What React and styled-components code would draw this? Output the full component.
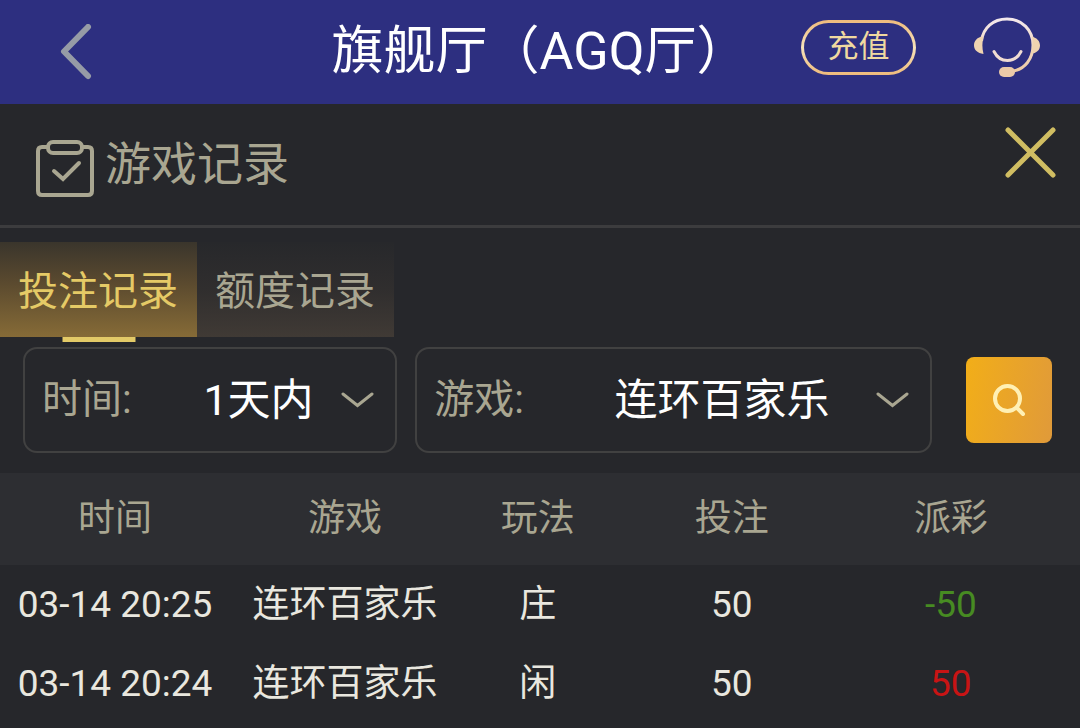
import React, { useState } from "react";
import styled, { createGlobalStyle } from "styled-components";

const games = ["连环百家乐", "经典百家乐", "龙虎"];
const ranges = ["1天内", "3天内", "7天内"];

const records = [
  { time: "03-14 20:25", game: "连环百家乐", play: "庄", bet: 50, payout: -50 },
  { time: "03-14 20:24", game: "连环百家乐", play: "闲", bet: 50, payout: 50 },
];

const BackIcon = () => (
  <svg width="32" height="56" viewBox="0 0 32 56" fill="none" aria-hidden="true">
    <path
      d="M28 3L4 27.500L28 52"
      stroke="#969ba6"
      strokeWidth="6"
      strokeLinecap="round"
      strokeLinejoin="round"
    />
  </svg>
);

const ServiceIcon = () => (
  <svg width="66" height="60" viewBox="0 0 66 60" fill="none" aria-hidden="true">
    <defs>
      <linearGradient id="service" x1="0" y1="0" x2="0" y2="60" gradientUnits="userSpaceOnUse">
        <stop stopColor="#f3e9ee" />
        <stop offset="1" stopColor="#ecc79c" />
      </linearGradient>
    </defs>
    <path
      d="M7.500 24C9 11 19 2 33 2C48 2 59 13 59 28C59 42 51 52 39 54"
      stroke="url(#service)"
      strokeWidth="3"
    />
    <path d="M8 19.500C3 20.500 0 24 0 28.500C0 33 3.500 36 9.500 37C8 31 8 25 9.500 20Z" fill="#efd3b0" />
    <path d="M58 19.500C63 21 66 24 66 28.500C66 33 63 36 56.500 37C59 31 59 25 58 19.500Z" fill="#efd3b0" />
    <path d="M20 34.500C23 40.500 27.500 43.500 33.500 43.500C39.500 43.500 44 40.500 47 34.500" stroke="#f0dcd2" strokeWidth="3" strokeLinecap="round" />
    <rect x="25" y="50" width="16" height="10" rx="5" fill="#ebcaa8" />
  </svg>
);

const RecordIcon = () => (
  <svg width="58" height="58" viewBox="0 0 58 58" fill="none" stroke="#a9a691" strokeWidth="4" aria-hidden="true">
    <path d="M11 7H6C3.500 7 2 8.500 2 11V51C2 53.500 3.500 55 6 55H52C54.500 55 56 53.500 56 51V11C56 8.500 54.500 7 52 7H47" />
    <rect x="12" y="2" width="34" height="11" rx="5" strokeWidth="4" />
    <path d="M18 31L27 39L43 23" strokeLinecap="round" />
  </svg>
);

const CloseIcon = () => (
  <svg width="51" height="51" viewBox="0 0 51 51" stroke="#d0bd62" strokeWidth="5" strokeLinecap="round" aria-hidden="true">
    <path d="M3 3L48 48M48 3L3 48" />
  </svg>
);

const ChevronIcon = () => (
  <svg width="33" height="17" viewBox="0 0 33 17" fill="none" stroke="#a9a691" strokeWidth="3" aria-hidden="true">
    <path d="M2 2L16.500 13.500L31 2" strokeLinecap="round" />
  </svg>
);

const SearchIcon = () => (
  <svg width="34" height="34" viewBox="0 0 34 34" fill="none" stroke="#fff0b4" strokeWidth="4" aria-hidden="true">
    <circle cx="15.500" cy="15.500" r="12.500" />
    <path d="M25 25L31 31" strokeLinecap="round" />
  </svg>
);

const SelectField = ({ id, label, options, grow }) => (
  <Field $grow={grow}>
    <FieldLabel htmlFor={id}>{label}:</FieldLabel>
    <Select id={id}>
      {options.map((option) => (
        <option key={option}>{option}</option>
      ))}
    </Select>
    <ChevronIcon />
  </Field>
);

const App = () => {
  const [tab, setTab] = useState("投注记录");

  return (
    <>
      <GlobalStyle />
      <Header>
        <BackButton aria-label="返回">
          <BackIcon />
        </BackButton>
        <PageTitle>旗舰厅（AGQ厅）</PageTitle>
        <Actions>
          <RechargeButton>充值</RechargeButton>
          <IconButton aria-label="客服">
            <ServiceIcon />
          </IconButton>
        </Actions>
      </Header>
      <main>
        <PanelHead>
          <PanelTitle>
            <RecordIcon />
            游戏记录
          </PanelTitle>
          <CloseButton aria-label="关闭">
            <CloseIcon />
          </CloseButton>
        </PanelHead>
        <Tabs role="tablist">
          {["投注记录", "额度记录"].map((name) => (
            <Tab
              key={name}
              role="tab"
              aria-selected={tab === name}
              $active={tab === name}
              onClick={() => setTab(name)}
            >
              {name}
            </Tab>
          ))}
        </Tabs>
        <Filters>
          <SelectField id="range" label="时间" options={ranges} grow={7} />
          <SelectField id="game" label="游戏" options={games} grow={10} />
          <SearchButton aria-label="搜索">
            <SearchIcon />
          </SearchButton>
        </Filters>
        <Table>
          <thead>
            <tr>
              <HeadCell $width="21.3%">时间</HeadCell>
              <HeadCell $width="21.3%">游戏</HeadCell>
              <HeadCell $width="14.4%">玩法</HeadCell>
              <HeadCell $width="21.5%">投注</HeadCell>
              <HeadCell>派彩</HeadCell>
            </tr>
          </thead>
          <tbody>
            {records.map((record) => (
              <tr key={record.time}>
                <Cell>{record.time}</Cell>
                <Cell>{record.game}</Cell>
                <Cell>{record.play}</Cell>
                <Cell>{record.bet}</Cell>
                <Cell $color={record.payout < 0 ? "#478b22" : "#c81414"}>{record.payout}</Cell>
              </tr>
            ))}
          </tbody>
        </Table>
      </main>
    </>
  );
};

export default App;

const GlobalStyle = createGlobalStyle`
  * {
    box-sizing: border-box;
  }

  body {
    margin: 0;
    background: #26272b;
    color: #e9e7df;
    font-family: Roboto, "Noto Sans CJK SC", sans-serif;
  }

  button,
  select {
    margin: 0;
    padding: 0;
    border: none;
    background: none;
    color: inherit;
    font-family: inherit;
    cursor: pointer;
  }

  svg {
    display: block;
    flex-shrink: 0;
  }
`;

const Header = styled.header`
  display: grid;
  grid-template-columns: 1fr auto 1fr;
  align-items: center;
  height: 104px;
  padding: 0 40px 0 60px;
  background: #2d2f80;
`;

const IconButton = styled.button`
  display: flex;
`;

const BackButton = styled(IconButton)`
  justify-self: start;
`;

const PageTitle = styled.h1`
  margin: 0 0 0 -20px;
  color: #fff;
  font-size: 52px;
  font-weight: 400;
  line-height: 64px;
  white-space: nowrap;
`;

const Actions = styled.div`
  display: flex;
  align-items: center;
  justify-content: flex-end;
  gap: 58px;
  padding-bottom: 10px;
`;

const RechargeButton = styled.button`
  width: 115px;
  height: 55px;
  border: 3px solid transparent;
  border-radius: 28px;
  background:
    linear-gradient(#2d2f80, #2d2f80) padding-box,
    linear-gradient(#eebb7c, #f6e3bb 50%, #eebb7c) border-box;
  color: #f0d9a0;
  font-size: 31px;
  line-height: 48px;
`;

const PanelHead = styled.div`
  display: flex;
  align-items: center;
  height: 124px;
  padding: 0 24px 0 36px;
  border-bottom: 3px solid #3c3c3e;
`;

const PanelTitle = styled.h2`
  display: flex;
  gap: 11px;
  margin: 0;
  color: #a9a691;
  font-size: 46px;
  font-weight: 400;
  line-height: 64px;

  svg {
    margin-top: 8px;
  }
`;

const CloseButton = styled(IconButton)`
  align-self: flex-start;
  margin: 23px 0 0 auto;
`;

const Tabs = styled.div`
  display: flex;
  padding-top: 14px;
`;

const Tab = styled.button`
  position: relative;
  height: 95px;
  padding: 0 19px 4px 18px;
  background: ${(props) =>
    props.$active
      ? "linear-gradient(#3a352c, #5c4b2f 45%, #866b37)"
      : "linear-gradient(#27282b, #302e2e 50%, #403a35)"};
  color: ${(props) => (props.$active ? "#e5ca66" : "#a9a691")};
  font-size: 40px;

  &::after {
    content: "";
    display: ${(props) => (props.$active ? "block" : "none")};
    position: absolute;
    top: 100%;
    left: 50%;
    width: 73px;
    height: 5px;
    background: #e3ca67;
    transform: translateX(-50%);
  }
`;

const Filters = styled.div`
  display: flex;
  align-items: center;
  padding: 10px 28px 20px 23px;
`;

const Field = styled.div`
  display: flex;
  flex: ${(props) => props.$grow} 1 0;
  align-items: center;
  min-width: 0;
  height: 106px;
  padding: 0 21px 0 17px;
  border: 2px solid #414141;
  border-radius: 14px;

  & + & {
    margin-left: 18px;
  }
`;

const FieldLabel = styled.label`
  color: #a9a691;
  font-size: 40px;
  line-height: 56px;
  white-space: nowrap;
`;

const Select = styled.select`
  flex: 1;
  min-width: 0;
  margin-left: 44px;
  appearance: none;
  color: #fff;
  font-size: 43px;
  line-height: 60px;
  text-align: center;
  text-align-last: center;
`;

const SearchButton = styled.button`
  display: flex;
  align-items: center;
  justify-content: center;
  flex-shrink: 0;
  width: 86px;
  height: 86px;
  margin-left: 34px;
  border-radius: 8px;
  background: linear-gradient(100deg, #f2ae18, #e09a3a);
`;

const Table = styled.table`
  width: 100%;
  border-collapse: collapse;
  table-layout: fixed;
  font-size: 37px;
  line-height: 48px;
  text-align: center;
  white-space: nowrap;

  th:last-child,
  td:last-child {
    padding-right: 26px;
  }
`;

const HeadCell = styled.th`
  width: ${(props) => props.$width || "auto"};
  height: 92px;
  padding: 0;
  background: #2d2e32;
  color: #a9a691;
  font-weight: 400;
`;

const Cell = styled.td`
  height: 79px;
  padding: 0;
  color: ${(props) => props.$color || "inherit"};
`;
